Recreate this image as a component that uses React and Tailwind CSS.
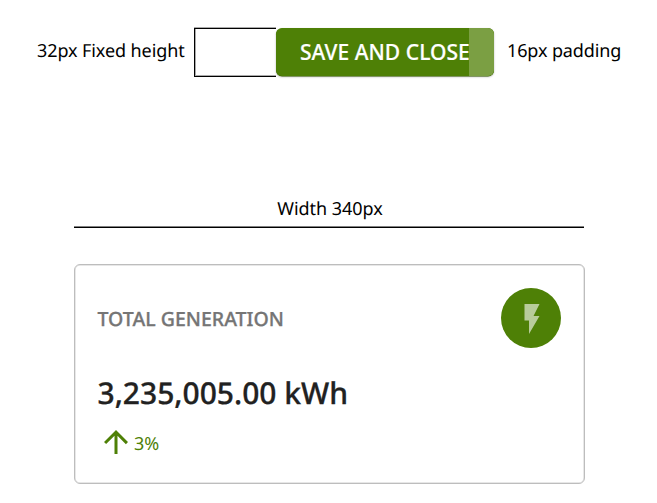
import React from 'react';

const SaveButton = () => (
  <button className="flex h-12 w-[218px] shrink-0 overflow-hidden rounded-[6px] bg-[#4e8006] pl-6 shadow-[0_1px_2px_rgba(0,0,0,0.3),0_0.5px_0_#4e8006]">
    <span className="w-[169px] whitespace-nowrap text-left text-[21px] leading-[49px] font-medium tracking-[0.04px] text-white [-webkit-text-stroke:0.2px]">
      SAVE AND CLOSE
    </span>
    {/* right padding */}
    <span className="h-full flex-1 bg-[#7b9f43]" />
  </button>
);

const GenerationCard = () => (
  <div className="ml-[74px] mt-[36px] h-[220px] w-[511px] rounded-[6px] border border-[#bdbdbd] px-[23px] pt-[23px] shadow-[inset_0_0_0_0.5px_#d0d0d0]">
    <div className="flex h-[60px] items-center justify-between">
      <span className="-ml-[0.5px] mt-[2px] whitespace-nowrap text-[19.5px] font-medium tracking-[0.02px] text-[#757575] [-webkit-text-stroke:0.3px]">
        TOTAL GENERATION
      </span>
      <div className="flex size-[60px] items-center justify-center rounded-full bg-[#4e8006] pl-[2px] pt-px">
        <svg viewBox="0 0 24 24" className="size-9 fill-[#b8cc9b]">
          <path d="M7 2v11h3v9l7-12h-4l4-8z" />
        </svg>
      </div>
    </div>
    <p className="-ml-[0.5px] mt-[24px] whitespace-nowrap text-[30px] leading-[42px] font-medium text-[#212121] [-webkit-text-stroke:0.3px]">
      3,235,005.00 kWh
    </p>
    <div className="-ml-[0.5px] mt-[10px] flex h-9 items-center text-[#4e8006]">
      <svg viewBox="0 0 24 24" className="size-9 fill-[#4e8006]">
        <path d="M4 12l1.41 1.41L11 7.83V20h2V7.83l5.58 5.59L20 12l-8-8-8 8z" />
      </svg>
      <span className="ml-[0.5px] pt-[4px] text-[18px]">3%</span>
    </div>
  </div>
);

const App = () => {
  return (
    <div className="h-[503px] w-[657px] overflow-hidden bg-white font-['Noto_Sans',sans-serif] text-black antialiased [text-rendering:geometricPrecision]">
      {/* Button spec */}
      <div className="flex pt-[28px]">
        <span className="ml-[37px] w-[157px] whitespace-nowrap text-[18px] leading-[46px] tracking-[-0.09px]">
          32px Fixed height
        </span>
        <div className="h-[49px] w-[82px] border-y border-l border-black shadow-[0_-1px_0_#aaa,inset_0_-1px_0_#aaa,inset_1px_0_0_#aaa]" />
        <SaveButton />
        <span className="ml-[13px] whitespace-nowrap text-[18px] leading-[46px] tracking-[-0.12px]">
          16px padding
        </span>
      </div>

      {/* Card spec */}
      <div className="mt-[118px] ml-[74px] w-[510px]">
        <p className="h-[33px] pl-[2px] text-center text-[18px] leading-[28px] tracking-[-0.04px]">
          Width 340px
        </p>
        <div className="mt-[-1px] h-px bg-black shadow-[0_-1px_0_#808080]" />
      </div>
      <GenerationCard />
    </div>
  );
};

export default App;
